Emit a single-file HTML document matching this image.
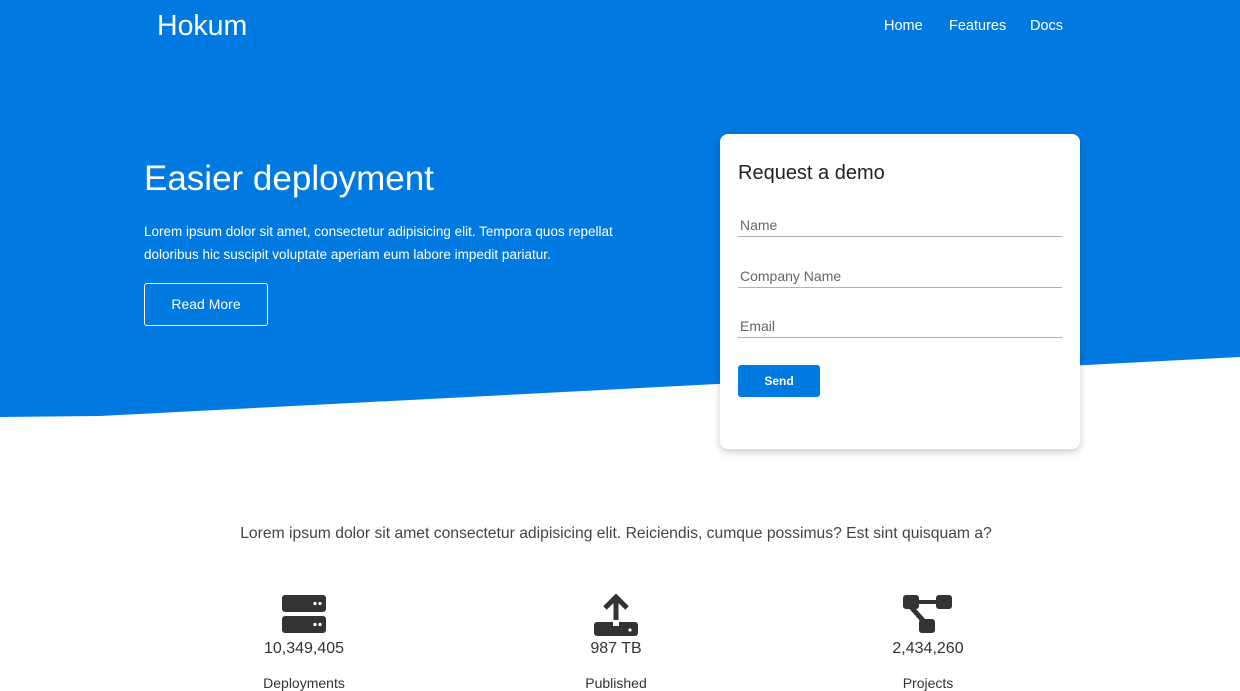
<!DOCTYPE html>
<html><head><style>
*{margin:0;padding:0;box-sizing:border-box}
body{width:1240px;height:691px;overflow:hidden;background:#fff;font-family:"Liberation Sans",sans-serif;position:relative}
.bg{position:absolute;left:0;top:0}
.logo{position:absolute;left:157px;top:10px;color:#fff;font-size:28.5px}
.nav{position:absolute;top:18px;color:#fff;font-size:14.5px}
h1{position:absolute;left:144px;top:159px;color:#fff;font-weight:normal;font-size:35px}
.lead{position:absolute;left:144px;top:220px;width:500px;color:#fff;font-size:13.5px;line-height:23px}
.btn{position:absolute;left:144px;top:283px;width:124px;height:43px;border:1px solid #fff;border-radius:3px;color:#fff;font-size:14px;text-align:center;line-height:41px}
.card{position:absolute;left:720px;top:134px;width:360px;height:315px;background:#fff;border-radius:8px;box-shadow:0 3px 8px rgba(0,0,0,.2)}
.card h2{position:absolute;left:18px;top:28px;font-weight:normal;font-size:20px;color:#222}
.f{position:absolute;left:18px;width:324px;border-bottom:1px solid #aab4c0;font-size:14px;color:#666;padding-left:2px;height:22px;padding-top:2px}
.send{position:absolute;left:18px;top:231px;width:82px;height:32px;background:#0079e0;border-radius:3px;color:#fff;font-weight:bold;font-size:12px;text-align:center;line-height:32px}
.tag{position:absolute;top:525px;left:0;width:1232px;text-align:center;font-size:15.7px;color:#444}
.st{position:absolute;width:200px;text-align:center;color:#333}
.st .n{position:absolute;top:51px;width:200px;font-size:16px}
.st .l{position:absolute;top:86px;width:200px;font-size:14px}
</style></head><body>
<svg class="bg" width="1240" height="691"><polygon points="0,0 1240,0 1240,357 100,416 0,417" fill="#0079e0"/></svg>
<div class="logo">Hokum</div>
<div class="nav" style="left:884px">Home</div>
<div class="nav" style="left:949px">Features</div>
<div class="nav" style="left:1030px">Docs</div>
<h1>Easier deployment</h1>
<div class="lead">Lorem ipsum dolor sit amet, consectetur adipisicing elit. Tempora quos repellat doloribus hic suscipit voluptate aperiam eum labore impedit pariatur.</div>
<div class="btn">Read More</div>
<div class="card">
<h2>Request a demo</h2>
<div class="f" style="top:81px">Name</div>
<div class="f" style="top:132px">Company Name</div>
<div class="f" style="top:182px">Email</div>
<div class="send">Send</div>
</div>
<div class="tag">Lorem ipsum dolor sit amet consectetur adipisicing elit. Reiciendis, cumque possimus? Est sint quisquam a?</div>
<div class="st" style="left:204px;top:589px">
<svg style="position:absolute;left:78px;top:6px" width="44" height="38"><rect x="0" y="0" width="44" height="17" rx="3" fill="#333"/><rect x="0" y="21" width="44" height="17" rx="3" fill="#333"/><circle cx="33" cy="8.5" r="1.6" fill="#fff"/><circle cx="38" cy="8.5" r="1.6" fill="#fff"/><circle cx="33" cy="29.5" r="1.6" fill="#fff"/><circle cx="38" cy="29.5" r="1.6" fill="#fff"/></svg>
<div class="n">10,349,405</div><div class="l">Deployments</div></div>
<div class="st" style="left:516px;top:589px">
<svg style="position:absolute;left:78px;top:3px" width="44" height="44"><rect x="0" y="30" width="44" height="14" rx="3" fill="#333"/><path d="M22 34V6M11 16L22 5L33 16" stroke="#333" stroke-width="5" fill="none"/><circle cx="22" cy="33" r="4" fill="#333"/><rect x="19" y="28" width="6" height="6" fill="#fff"/><circle cx="36" cy="38" r="1.6" fill="#fff"/></svg>
<div class="n">987 TB</div><div class="l">Published</div></div>
<div class="st" style="left:828px;top:589px">
<svg style="position:absolute;left:75px;top:6px" width="50" height="38"><rect x="0" y="0" width="16" height="14" rx="3" fill="#333"/><rect x="33" y="0" width="16" height="14" rx="3" fill="#333"/><rect x="16" y="24" width="16" height="14" rx="3" fill="#333"/><rect x="14" y="5" width="22" height="4" fill="#333"/><path d="M8 12L24 30" stroke="#333" stroke-width="5"/></svg>
<div class="n">2,434,260</div><div class="l">Projects</div></div>
</body></html>
